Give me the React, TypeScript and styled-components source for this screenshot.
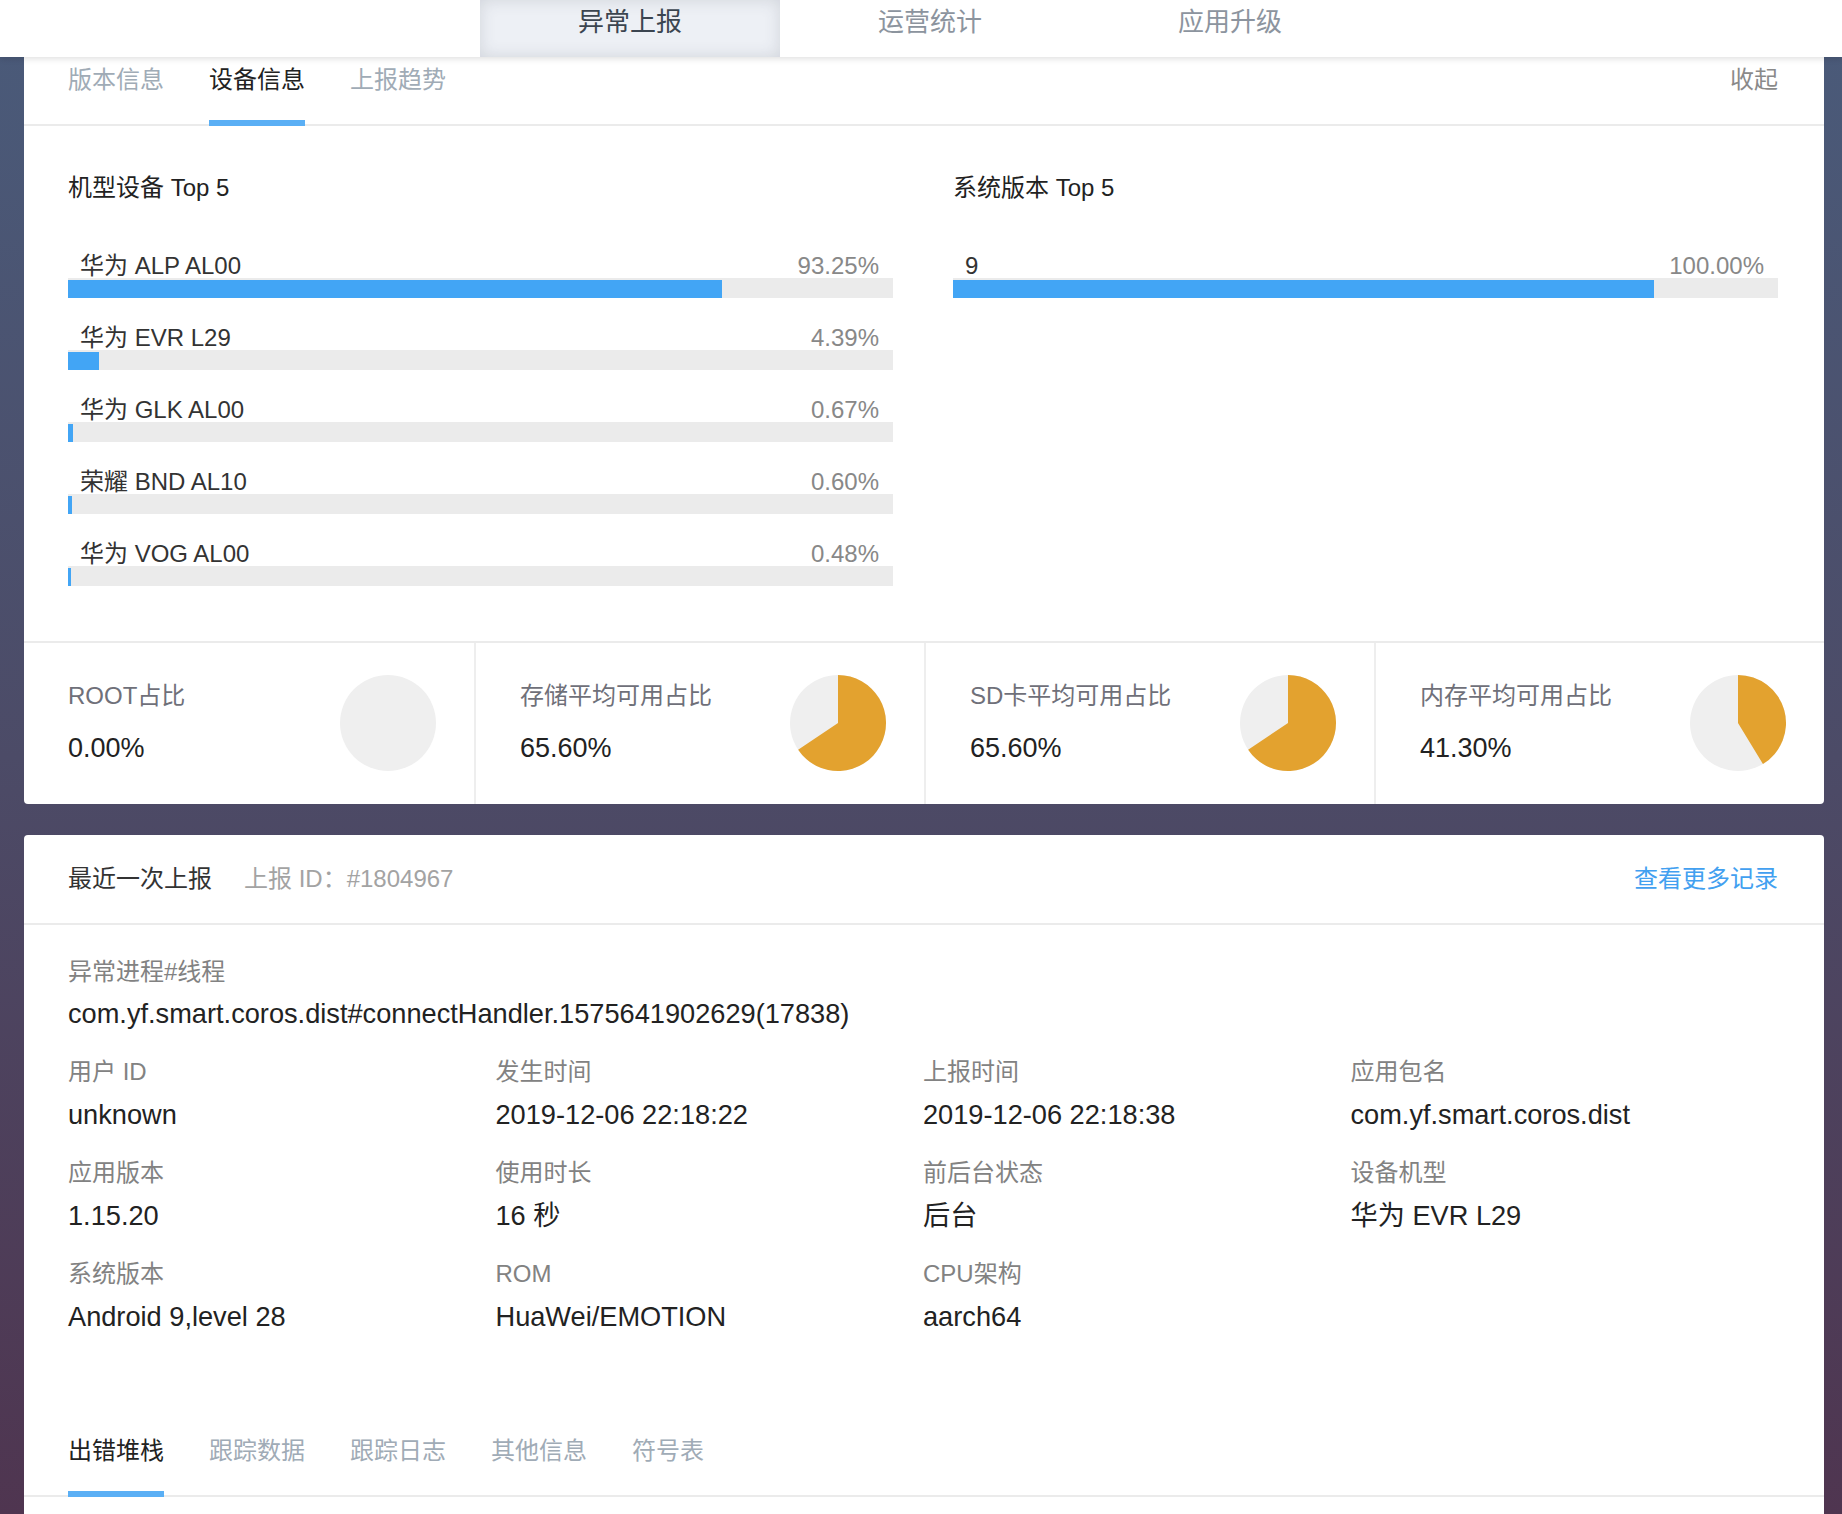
import React from 'react';
import styled, { createGlobalStyle } from 'styled-components';

const GlobalStyle = createGlobalStyle`
  html, body { margin: 0; padding: 0; }
  body {
    font-family: "Liberation Sans", "Noto Sans CJK SC", sans-serif;
    background: linear-gradient(180deg, #4a5b7a 0%, #4c4b67 50%, #4f3550 100%) fixed;
    min-height: 100vh;
  }
  * { box-sizing: border-box; }
`;

const Page = styled.div`
  min-height: 100vh;
`;

const TopNav = styled.nav`
  position: relative;
  z-index: 2;
  height: 57px;
  background: #fff;
  box-shadow: 0 2px 6px rgba(0, 0, 0, 0.12);
  display: flex;
  justify-content: center;
  padding-left: 18px;
`;

const NavTab = styled.div<{ $active?: boolean }>`
  width: 300px;
  height: 57px;
  text-align: center;
  font-size: 26px;
  line-height: 45px;
  color: ${(p) => (p.$active ? '#3b4550' : '#8c949e')};
  background: ${(p) => (p.$active ? '#edf0f5' : 'transparent')};
  box-shadow: ${(p) => (p.$active ? 'inset 0 0 16px rgba(60, 70, 90, 0.16)' : 'none')};
`;

const Main = styled.main`
  display: flex;
  flex-direction: column;
  gap: 31px;
  padding: 0 18px 0 24px;
`;

const Card = styled.section<{ $top?: boolean }>`
  background: #fff;
  border-radius: ${(p) => (p.$top ? '0 0 4px 4px' : '4px 4px 0 0')};
  overflow: hidden;
`;

const TabBar = styled.div<{ $mt?: number }>`
  display: flex;
  align-items: flex-start;
  gap: 45px;
  padding: 0 46px 0 44px;
  margin-top: ${(p) => p.$mt ?? 0}px;
  border-bottom: 2px solid #ebebeb;
`;

const Tab = styled.div<{ $active?: boolean }>`
  font-size: 24px;
  line-height: 30px;
  padding: 8px 0 25px;
  margin-bottom: -2px;
  border-bottom: 6px solid ${(p) => (p.$active ? '#5aaff5' : 'transparent')};
  color: ${(p) => (p.$active ? '#222' : '#a0abb6')};
  white-space: nowrap;
`;

const Collapse = styled.div`
  margin-left: auto;
  font-size: 24px;
  line-height: 30px;
  padding-top: 8px;
  color: #8a8a8a;
`;

const TopGrid = styled.div`
  display: grid;
  grid-template-columns: 1fr 1fr;
  column-gap: 60px;
  padding: 47px 46px 55px 44px;
  border-bottom: 2px solid #ebebeb;
`;

const Column = styled.div`
  display: flex;
  flex-direction: column;
`;

const ChartTitle = styled.div`
  font-size: 24px;
  line-height: 30px;
  color: #222;
  margin-bottom: 49px;
`;

const Rows = styled.div`
  display: flex;
  flex-direction: column;
  gap: 26px;
`;

const BarRow = styled.div`
  display: flex;
  flex-direction: column;
`;

const BarLabel = styled.div`
  display: flex;
  justify-content: space-between;
  padding: 1px 14px 0 12px;
  height: 26px;
  font-size: 24px;
  line-height: 26px;
  color: #333;
`;

const Pct = styled.span`
  color: #888;
`;

const Track = styled.div`
  height: 20px;
  background: #ebebeb;
  padding-top: 2px;
`;

const Fill = styled.div`
  height: 18px;
  background: #42a5f5;
`;

const PieRow = styled.div`
  display: grid;
  grid-template-columns: repeat(4, 1fr);
`;

const PieCell = styled.div<{ $first?: boolean }>`
  height: 161px;
  display: flex;
  align-items: center;
  justify-content: space-between;
  padding: 0 38px 2px 44px;
  border-left: ${(p) => (p.$first ? 'none' : '2px solid #eeeeee')};
`;

const PieText = styled.div`
  display: flex;
  flex-direction: column;
  gap: 21px;
`;

const PieLabel = styled.div`
  font-size: 24px;
  line-height: 30px;
  color: #6f7079;
`;

const PieValue = styled.div`
  font-size: 27px;
  line-height: 32px;
  color: #222;
`;

const CardHeader = styled.div`
  height: 90px;
  display: flex;
  align-items: center;
  gap: 32px;
  padding: 0 46px 6px 44px;
  border-bottom: 2px solid #ebebeb;
`;

const HeaderTitle = styled.div`
  font-size: 24px;
  color: #333;
`;

const HeaderId = styled.div`
  font-size: 24px;
  color: #a3a3a3;
`;

const MoreLink = styled.a`
  margin-left: auto;
  font-size: 24px;
  color: #42a0f0;
  text-decoration: none;
`;

const Body = styled.div`
  padding: 32px 46px 0 44px;
`;

const Field = styled.div`
  display: flex;
  flex-direction: column;
`;

const FieldLabel = styled.div<{ $gap?: number }>`
  font-size: 24px;
  line-height: 30px;
  color: #828282;
  margin-bottom: ${(p) => p.$gap ?? 11}px;
`;

const FieldValue = styled.div`
  font-size: 27.2px;
  line-height: 34px;
  color: #222;
  white-space: nowrap;
`;

const DetailGrid = styled.div`
  display: grid;
  grid-template-columns: repeat(4, 1fr);
  row-gap: 26px;
  margin-top: 26px;
`;

const TabContent = styled.div`
  height: 220px;
`;

const PieSvg = ({ value }: { value: number }) => {
  const r = 48;
  const a = 2 * Math.PI * value;
  const x = r + r * Math.sin(a);
  const y = r - r * Math.cos(a);
  const large = value > 0.5 ? 1 : 0;
  return (
    <svg width={96} height={96} viewBox="0 0 96 96">
      <circle cx={48} cy={48} r={48} fill="#efefef" />
      {value > 0 && (
        <path d={`M48 48 L48 0 A48 48 0 ${large} 1 ${x} ${y} Z`} fill="#e3a22f" />
      )}
    </svg>
  );
};

const modelRows = [
  { name: '华为 ALP AL00', pct: 93.25 },
  { name: '华为 EVR L29', pct: 4.39 },
  { name: '华为 GLK AL00', pct: 0.67 },
  { name: '荣耀 BND AL10', pct: 0.6 },
  { name: '华为 VOG AL00', pct: 0.48 },
];

const sysRows = [{ name: '9', pct: 100 }];

const pies = [
  { label: 'ROOT占比', value: 0 },
  { label: '存储平均可用占比', value: 0.656 },
  { label: 'SD卡平均可用占比', value: 0.656 },
  { label: '内存平均可用占比', value: 0.413 },
];

const details = [
  { label: '用户 ID', value: 'unknown' },
  { label: '发生时间', value: '2019-12-06 22:18:22' },
  { label: '上报时间', value: '2019-12-06 22:18:38' },
  { label: '应用包名', value: 'com.yf.smart.coros.dist' },
  { label: '应用版本', value: '1.15.20' },
  { label: '使用时长', value: '16 秒' },
  { label: '前后台状态', value: '后台' },
  { label: '设备机型', value: '华为 EVR L29' },
  { label: '系统版本', value: 'Android 9,level 28' },
  { label: 'ROM', value: 'HuaWei/EMOTION' },
  { label: 'CPU架构', value: 'aarch64' },
];

const BarList = ({ rows }: { rows: { name: string; pct: number }[] }) => (
  <Rows>
    {rows.map((r) => (
      <BarRow key={r.name}>
        <BarLabel>
          <span>{r.name}</span>
          <Pct>{r.pct.toFixed(2)}%</Pct>
        </BarLabel>
        <Track>
          <Fill style={{ width: `${Math.max(r.pct * 0.85, 0.35)}%` }} />
        </Track>
      </BarRow>
    ))}
  </Rows>
);

export default function App() {
  return (
    <Page>
      <GlobalStyle />
      <TopNav>
        <NavTab $active>异常上报</NavTab>
        <NavTab>运营统计</NavTab>
        <NavTab>应用升级</NavTab>
      </TopNav>
      <Main>
        <Card $top>
          <TabBar>
            <Tab>版本信息</Tab>
            <Tab $active>设备信息</Tab>
            <Tab>上报趋势</Tab>
            <Collapse>收起</Collapse>
          </TabBar>
          <TopGrid>
            <Column>
              <ChartTitle>机型设备 Top 5</ChartTitle>
              <BarList rows={modelRows} />
            </Column>
            <Column>
              <ChartTitle>系统版本 Top 5</ChartTitle>
              <BarList rows={sysRows} />
            </Column>
          </TopGrid>
          <PieRow>
            {pies.map((p, i) => (
              <PieCell key={p.label} $first={i === 0}>
                <PieText>
                  <PieLabel>{p.label}</PieLabel>
                  <PieValue>{(p.value * 100).toFixed(2)}%</PieValue>
                </PieText>
                <PieSvg value={p.value} />
              </PieCell>
            ))}
          </PieRow>
        </Card>
        <Card>
          <CardHeader>
            <HeaderTitle>最近一次上报</HeaderTitle>
            <HeaderId>上报 ID：#1804967</HeaderId>
            <MoreLink href="#">查看更多记录</MoreLink>
          </CardHeader>
          <Body>
            <Field>
              <FieldLabel $gap={10}>异常进程#线程</FieldLabel>
              <FieldValue>com.yf.smart.coros.dist#connectHandler.1575641902629(17838)</FieldValue>
            </Field>
            <DetailGrid>
              {details.map((d) => (
                <Field key={d.label}>
                  <FieldLabel>{d.label}</FieldLabel>
                  <FieldValue>{d.value}</FieldValue>
                </Field>
              ))}
            </DetailGrid>
          </Body>
          <TabBar $mt={94}>
            <Tab $active>出错堆栈</Tab>
            <Tab>跟踪数据</Tab>
            <Tab>跟踪日志</Tab>
            <Tab>其他信息</Tab>
            <Tab>符号表</Tab>
          </TabBar>
          <TabContent />
        </Card>
      </Main>
    </Page>
  );
}
